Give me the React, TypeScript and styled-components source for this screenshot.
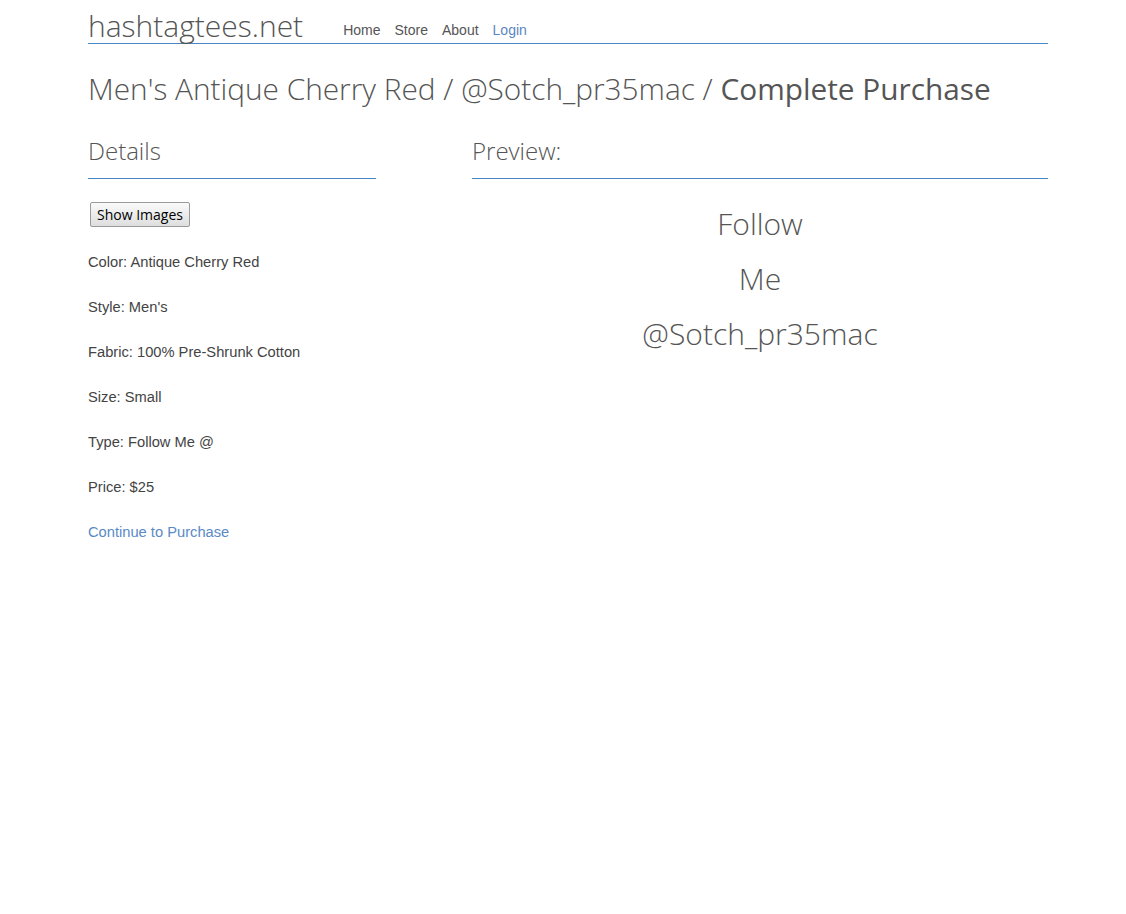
import { FC } from 'react';
import styled, { createGlobalStyle } from 'styled-components';

const GlobalStyle = createGlobalStyle`
  html, body {
    margin: 0;
    padding: 0;
    background: #ffffff;
  }
  body {
    font-family: "Liberation Sans", Arial, sans-serif;
    color: #555555;
  }
`;

const details = [
  'Color: Antique Cherry Red',
  "Style: Men's",
  'Fabric: 100% Pre-Shrunk Cotton',
  'Size: Small',
  'Type: Follow Me @',
  'Price: $25',
];

const navItems = [
  { label: 'Home', active: false },
  { label: 'Store', active: false },
  { label: 'About', active: false },
  { label: 'Login', active: true },
];

const App: FC = () => {
  return (
    <>
      <GlobalStyle />
      <Page>
        <Header>
          <Brand>hashtagtees.net</Brand>
          <Nav>
            {navItems.map((item) => (
              <NavLink key={item.label} $active={item.active}>
                {item.label}
              </NavLink>
            ))}
          </Nav>
        </Header>
        <Title>
          Men's Antique Cherry Red / @Sotch_pr35mac / <strong>Complete Purchase</strong>
        </Title>
        <Columns>
          <section>
            <SectionTitle>Details</SectionTitle>
            <ShowButton>Show Images</ShowButton>
            <DetailList>
              {details.map((d) => (
                <DetailItem key={d}>{d}</DetailItem>
              ))}
              <DetailItem>
                <PurchaseLink>Continue to Purchase</PurchaseLink>
              </DetailItem>
            </DetailList>
          </section>
          <section>
            <SectionTitle>Preview:</SectionTitle>
            <Preview>
              <PreviewLine>Follow</PreviewLine>
              <PreviewLine>Me</PreviewLine>
              <PreviewLine>@Sotch_pr35mac</PreviewLine>
            </Preview>
          </section>
        </Columns>
      </Page>
    </>
  );
};
export default App;

const Page = styled.div`
  width: 960px;
  margin: 0 auto;
  padding: 4px 0 0 10px;
`;

const Header = styled.header`
  display: flex;
  align-items: flex-end;
  border-bottom: 1px solid #4a86c5;
  height: 39px;
`;

const Brand = styled.div`
  font-family: "Open Sans", sans-serif;
  font-weight: 300;
  font-size: 30px;
  line-height: 40px;
  color: #555555;
  margin-bottom: -3px;
`;

const Nav = styled.nav`
  display: flex;
  gap: 14px;
  margin-left: 40px;
  padding-bottom: 4px;
`;

const NavLink = styled.a<{ $active: boolean }>`
  font-size: 14px;
  line-height: 18px;
  color: ${(p) => (p.$active ? '#5a86bf' : '#555555')};
  cursor: pointer;
`;

const Title = styled.h1`
  font-family: "Open Sans", sans-serif;
  font-weight: 300;
  font-size: 29.8px;
  line-height: 40px;
  color: #555555;
  margin: 25px 0 0;

  strong {
    font-weight: 400;
  }
`;

const Columns = styled.div`
  display: grid;
  grid-template-columns: 288px 1fr;
  column-gap: 96px;
  margin-top: 27px;
`;

const SectionTitle = styled.h2`
  font-family: "Open Sans", sans-serif;
  font-weight: 300;
  font-size: 24px;
  line-height: 30px;
  color: #555555;
  margin: 0;
  padding-bottom: 12px;
  border-bottom: 1px solid #4a86c5;
`;

const ShowButton = styled.button`
  display: block;
  margin: 23px 0 0 2px;
  height: 25px;
  padding: 0 6px;
  font-family: "Open Sans", sans-serif;
  font-size: 14px;
  color: #000000;
  background: linear-gradient(#fafafa, #dedede);
  border: 1px solid #9a9a9a;
  border-radius: 2px;
  cursor: pointer;
`;

const DetailList = styled.div`
  margin-top: 26px;
  display: flex;
  flex-direction: column;
  gap: 27px;
`;

const DetailItem = styled.p`
  margin: 0;
  font-size: 14.7px;
  line-height: 18px;
  color: #444444;
`;

const PurchaseLink = styled.a`
  color: #5a8ac6;
  cursor: pointer;
`;

const Preview = styled.div`
  margin-top: 17px;
  display: flex;
  flex-direction: column;
  align-items: center;
`;

const PreviewLine = styled.div`
  font-family: "Open Sans", sans-serif;
  font-weight: 300;
  font-size: 30px;
  line-height: 55px;
  color: #555555;
`;
